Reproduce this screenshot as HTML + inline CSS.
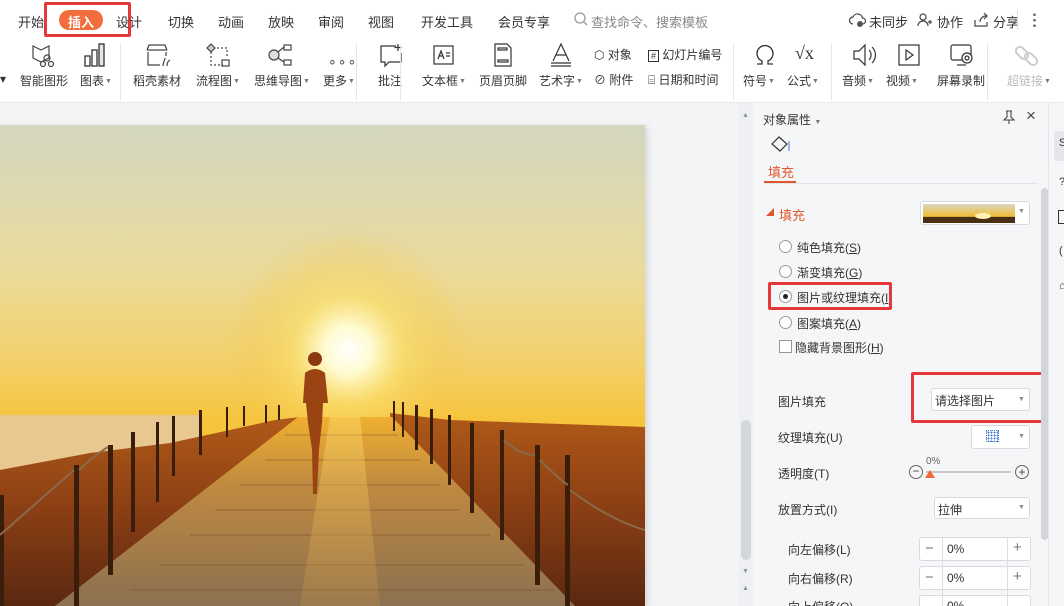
<!DOCTYPE html>
<html><head><meta charset="utf-8"><style>
*{margin:0;padding:0;box-sizing:border-box}
html,body{width:1064px;height:606px;overflow:hidden}
body{background:#f3f4f6;font-family:"Liberation Sans","Noto Sans CJK SC",sans-serif;color:#333;position:relative}
.a{position:absolute;white-space:nowrap}
.t{font-size:13px;top:12px;color:#333}
.l{font-size:12px;top:72px;color:#333}
.ar{font-size:7px;color:#777;vertical-align:2px;margin-left:1px}
.sep{position:absolute;top:44px;width:1px;height:56px;background:#e6e7ea}
.ic{position:absolute;top:42px}
.p{font-size:12px;color:#333}
.radio{position:absolute;width:13px;height:13px;border:1px solid #999;border-radius:50%;background:#fff}
.box{position:absolute;background:#fff;border:1px solid #d8dade;border-radius:3px}
</style></head><body>
<div class="a" style="left:0;top:0;width:1064px;height:103px;background:#fff;border-bottom:1px solid #e8e9ec"></div>
<div class="a t" style="left:18px">开始</div>
<div class="a" style="left:59px;top:10px;width:44px;height:20px;border-radius:10px;background:#f36c3c"></div>
<div class="a t" style="left:68px;color:#fff;font-weight:bold">插入</div>
<div class="a" style="left:44px;top:2px;width:87px;height:35px;border:3px solid #e5383b;border-radius:2px"></div>
<div class="a t" style="left:116px">设计</div>
<div class="a t" style="left:168px">切换</div>
<div class="a t" style="left:218px">动画</div>
<div class="a t" style="left:268px">放映</div>
<div class="a t" style="left:318px">审阅</div>
<div class="a t" style="left:368px">视图</div>
<div class="a t" style="left:421px">开发工具</div>
<div class="a t" style="left:498px">会员专享</div>
<svg class="a" style="left:574px;top:12px" width="14" height="14"><circle cx="6" cy="6" r="5" fill="none" stroke="#999" stroke-width="1.3"/><path d="M10 10l3 3" stroke="#999" stroke-width="1.3"/></svg>
<div class="a t" style="left:591px;color:#888">查找命令、搜索模板</div>
<svg class="a" style="left:849px;top:12px" width="18" height="16"><path d="M4 12a3.5 3.5 0 0 1 0-7a5 5 0 0 1 9.5 1a3 3 0 0 1 0 6" fill="none" stroke="#444" stroke-width="1.2"/><circle cx="11" cy="12" r="3" fill="#555"/></svg>
<div class="a t" style="left:869px">未同步</div>
<svg class="a" style="left:917px;top:12px" width="16" height="16"><circle cx="6" cy="5" r="3" fill="none" stroke="#444" stroke-width="1.2"/><path d="M1 14a5 5 0 0 1 10 0M11 10h4M13 8v4" fill="none" stroke="#444" stroke-width="1.2"/></svg>
<div class="a t" style="left:937px">协作</div>
<svg class="a" style="left:973px;top:12px" width="16" height="16"><path d="M2 8v6h12v-4M7 10a6 6 0 0 1 7-6M11 1l3 3-3 3" fill="none" stroke="#444" stroke-width="1.2"/></svg>
<div class="a t" style="left:993px">分享</div>
<div class="a" style="left:1017px;top:10px;width:1px;height:20px;background:#ddd"></div>
<div class="a" style="left:1033px;top:12px;width:3px;height:16px;background:radial-gradient(circle,#666 1.2px,transparent 1.5px) 0 0/3px 5.5px"></div>

<svg class="ic" style="left:30px" width="30" height="28" fill="none" stroke="#444" stroke-width="1.2"><path d="M3 4l8 4 8-4v12l-8 4-8-4z"/><circle cx="17" cy="16" r="3"/><circle cx="13" cy="22" r="2.5"/><circle cx="21" cy="22" r="2.5"/></svg>
<svg class="ic" style="left:83px" width="24" height="28" fill="none" stroke="#333" stroke-width="1.3"><rect x="2" y="14" width="5" height="10"/><rect x="9" y="8" width="5" height="16"/><rect x="16" y="2" width="5" height="22" fill="#e3e5e8"/></svg>
<svg class="ic" style="left:143px" width="30" height="28" fill="none" stroke="#444" stroke-width="1.2"><path d="M4 8h20M4 8l2-5h16l2 5M5 10v13h12M23 10v4"/><path d="M20 24c0-4 2-6 2-8M24 24c0-3 1-5 3-6" /></svg>
<svg class="ic" style="left:205px" width="26" height="28" fill="none" stroke="#444" stroke-width="1.2"><path d="M6 2l4 4-4 4-4-4z" fill="#ccc"/><path d="M6 10v13h12M12 6h10v10" stroke-dasharray="2 2"/><rect x="17" y="18" width="7" height="6"/></svg>
<svg class="ic" style="left:266px" width="30" height="28" fill="none" stroke="#444" stroke-width="1.2"><circle cx="8" cy="13" r="5" fill="#ddd"/><rect x="18" y="3" width="7" height="5"/><rect x="18" y="18" width="7" height="5"/><path d="M12 10l6-5M12 16l6 4"/></svg>
<div class="a" style="left:328px;top:53px;font-size:14px;color:#555;letter-spacing:1px">∘∘∘</div>
<svg class="ic" style="left:378px" width="26" height="28" fill="none" stroke="#333" stroke-width="1.2"><path d="M18 4H3v16h4v4l4-4h12v-9M20 2v7M16.5 5.5h7"/></svg>
<svg class="ic" style="left:432px" width="24" height="28" fill="none" stroke="#333" stroke-width="1.2"><rect x="2" y="4" width="19" height="18"/><path d="M6 17l3-8 3 8M7 14h4M14 11h4M14 14h4"/></svg>
<svg class="ic" style="left:492px" width="22" height="28" fill="none" stroke="#333" stroke-width="1.2"><path d="M3 2h12l4 4v18H3z"/><rect x="6" y="6" width="9" height="2"/><rect x="6" y="18" width="10" height="2"/></svg>
<svg class="ic" style="left:548px" width="26" height="28" fill="none" stroke="#333" stroke-width="1.2"><path d="M5 19l8-17 8 17M8 13h10M3 21h20M3 24h20"/></svg>
<div class="a p" style="left:594px;top:46px">⬡ 对象</div>
<div class="a p" style="left:594px;top:71px">⊘ 附件</div>
<div class="a p" style="left:648px;top:46px"><span style="border:1px solid #333;font-size:9px;padding:0 2px">#</span> 幻灯片编号</div>
<div class="a p" style="left:648px;top:71px">⌸ 日期和时间</div>
<svg class="ic" style="left:752px" width="26" height="28" fill="none" stroke="#333" stroke-width="1.3"><path d="M5 22h5v-3a8 8 0 1 1 6 0v3h5"/></svg>
<div class="a" style="left:795px;top:43px;font-size:18px;font-family:'Liberation Serif',serif;color:#333">√x</div>
<svg class="ic" style="left:851px" width="26" height="28" fill="none" stroke="#333" stroke-width="1.2"><path d="M3 9h5l6-6v20l-6-6H3zM18 8a7 7 0 0 1 0 10M21 5a11 11 0 0 1 0 16"/></svg>
<svg class="ic" style="left:897px" width="24" height="28" fill="none" stroke="#333" stroke-width="1.2"><rect x="2" y="3" width="20" height="20"/><path d="M9 8v10l7-5z"/></svg>
<svg class="ic" style="left:948px" width="28" height="28" fill="none" stroke="#333" stroke-width="1.2"><rect x="3" y="3" width="20" height="15" rx="2"/><path d="M9 23h9"/><circle cx="19" cy="16" r="5" fill="#fff"/><circle cx="19" cy="16" r="2"/></svg>
<svg class="ic" style="left:1015px" width="26" height="28" fill="none" stroke="#ccc" stroke-width="2"><rect x="3" y="4" width="8" height="14" rx="4" transform="rotate(-45 7 11)"/><rect x="12" y="10" width="8" height="14" rx="4" transform="rotate(-45 16 17)"/></svg>

<div class="a l" style="left:0">▾</div>
<div class="a l" style="left:20px">智能图形</div>
<div class="a l" style="left:80px">图表<span class="ar">▼</span></div>
<div class="a l" style="left:133px">稻壳素材</div>
<div class="a l" style="left:196px">流程图<span class="ar">▼</span></div>
<div class="a l" style="left:254px">思维导图<span class="ar">▼</span></div>
<div class="a l" style="left:323px">更多<span class="ar">▼</span></div>
<div class="a l" style="left:378px">批注</div>
<div class="a l" style="left:422px">文本框<span class="ar">▼</span></div>
<div class="a l" style="left:479px">页眉页脚</div>
<div class="a l" style="left:539px">艺术字<span class="ar">▼</span></div>
<div class="a l" style="left:743px">符号<span class="ar">▼</span></div>
<div class="a l" style="left:787px">公式<span class="ar">▼</span></div>
<div class="a l" style="left:842px">音频<span class="ar">▼</span></div>
<div class="a l" style="left:886px">视频<span class="ar">▼</span></div>
<div class="a l" style="left:937px">屏幕录制</div>
<div class="a l" style="left:1007px;color:#bbb">超链接<span class="ar">▼</span></div>
<div class="sep" style="left:120px"></div><div class="sep" style="left:356px"></div><div class="sep" style="left:400px"></div><div class="sep" style="left:733px"></div><div class="sep" style="left:831px"></div><div class="sep" style="left:987px"></div>

<svg class="a" style="left:0;top:125px;box-shadow:2px 2px 6px rgba(0,0,0,.15)" width="645" height="481">
<defs>
<linearGradient id="sky" x1="0" y1="0" x2="0" y2="1"><stop offset="0" stop-color="#d3d6c0"/><stop offset=".3" stop-color="#eadb9c"/><stop offset=".5" stop-color="#f3d068"/><stop offset=".62" stop-color="#f6c43a"/><stop offset="1" stop-color="#f2b020"/></linearGradient>
<radialGradient id="sun" cx="348" cy="225" r="120" gradientUnits="userSpaceOnUse"><stop offset="0" stop-color="#ffffff"/><stop offset=".2" stop-color="#fffbd0"/><stop offset=".45" stop-color="#fae070" stop-opacity=".7"/><stop offset="1" stop-color="#f5c040" stop-opacity="0"/></radialGradient>
<linearGradient id="gr" x1="0" y1="0" x2="0" y2="1"><stop offset="0" stop-color="#b05a18"/><stop offset=".5" stop-color="#8a3e14"/><stop offset="1" stop-color="#5a2810"/></linearGradient>
<linearGradient id="bw" x1="0" y1="0" x2="0" y2="1"><stop offset="0" stop-color="#f0b030"/><stop offset=".35" stop-color="#c08a40"/><stop offset="1" stop-color="#8c7050"/></linearGradient>
<linearGradient id="ref" x1="0" y1="0" x2="0" y2="1"><stop offset="0" stop-color="#ffe070" stop-opacity=".9"/><stop offset="1" stop-color="#f0b040" stop-opacity=".3"/></linearGradient>
</defs>
<rect width="645" height="481" fill="url(#sky)"/>
<rect width="645" height="481" fill="url(#sun)"/>
<rect y="290" width="200" height="60" fill="#e8c890"/>
<path d="M0 345L90 328L170 318L230 305L275 295L300 292L300 481H0z" fill="url(#gr)"/>
<path d="M390 288L450 295L645 302V481H390z" fill="url(#gr)"/>
<path d="M298 292L392 292L575 481L55 481z" fill="url(#bw)"/>
<g stroke="#6a4a28" stroke-width="1" opacity=".45">
<path d="M285 310H398M265 335H420M240 360H440M215 385H460M190 410H490M160 440H525M130 465H555"/></g>
<path d="M330 292L360 292L380 481L300 481z" fill="url(#ref)" opacity=".5"/>
<g fill="#3a1e0c">
<rect x="0" y="370" width="4" height="111"/><rect x="74" y="340" width="5" height="141"/><rect x="108" y="320" width="5" height="130"/><rect x="131" y="307" width="4" height="100"/><rect x="156" y="297" width="3" height="80"/><rect x="172" y="291" width="3" height="60"/><rect x="199" y="285" width="3" height="45"/><rect x="226" y="282" width="2" height="30"/><rect x="243" y="281" width="2" height="20"/><rect x="265" y="280" width="2" height="18"/><rect x="278" y="280" width="2" height="15"/>
<rect x="393" y="276" width="2" height="30"/><rect x="402" y="277" width="2" height="35"/><rect x="415" y="280" width="3" height="45"/><rect x="430" y="284" width="3" height="55"/><rect x="448" y="290" width="3" height="70"/><rect x="470" y="298" width="4" height="90"/><rect x="500" y="305" width="4" height="110"/><rect x="535" y="320" width="5" height="140"/><rect x="565" y="330" width="5" height="151"/>
</g>
<path d="M0 410Q40 375 74 345M79 345Q95 330 108 322M504 315Q520 330 535 330M540 335Q560 355 568 360M570 365Q610 395 645 405" stroke="#8a6a4a" stroke-width="2" fill="none"/>
<circle cx="315" cy="234" r="7" fill="#8a3a10"/>
<path d="M305 248q10-8 20 0l3 30h-5l-1 20l-3 26l-2 45h-4l-1-45l-4-26l-2-20h-3z" fill="#9a4414"/>
</svg>

<div class="a" style="left:739px;top:103px;width:14px;height:503px;background:#eef0f3"></div>
<div class="a" style="left:741px;top:420px;width:10px;height:140px;border-radius:5px;background:#d3d6dc"></div>
<div class="a" style="left:742px;top:112px;font-size:7px;color:#8a94a6">▲</div>
<div class="a" style="left:742px;top:568px;font-size:7px;color:#8a94a6">▼</div>
<div class="a" style="left:742px;top:585px;font-size:7px;color:#8a94a6">▲</div>

<div class="a" style="left:753px;top:103px;width:295px;height:503px;background:#f5f6f8"></div>
<div class="a p" style="left:763px;top:111px">对象属性 <span style="font-size:7px;color:#777">▼</span></div>
<svg class="a" style="left:1002px;top:110px" width="14" height="14" fill="none" stroke="#444" stroke-width="1.1"><path d="M4 1h6M5 1v6l-3 3h10l-3-3V1M7 10v4"/></svg>
<div class="a" style="left:1026px;top:106px;font-size:17px;color:#444">×</div>
<svg class="a" style="left:769px;top:135px" width="24" height="20" fill="none" stroke="#333" stroke-width="1.2"><path d="M10 2l8 7-7 7-8-7z"/><path d="M20 6v10" stroke="#5a8ee0"/></svg>
<div class="a" style="left:768px;top:162px;font-size:13px;color:#e0582a">填充</div>
<div class="a" style="left:764px;top:181px;width:32px;height:2px;background:#e0582a"></div>
<div class="a" style="left:764px;top:183px;width:274px;height:1px;background:#e2e4e8"></div>
<div class="a" style="left:766px;top:207px;font-size:8px;color:#e0582a">◢</div>
<div class="a" style="left:779px;top:205px;font-size:13px;color:#e0582a">填充</div>
<div class="box" style="left:920px;top:201px;width:110px;height:24px"></div>
<svg class="a" style="left:923px;top:204px" width="92" height="19"><defs><linearGradient id="ts" x1="0" y1="0" x2="0" y2="1"><stop offset="0" stop-color="#d8d8c0"/><stop offset=".6" stop-color="#f0c040"/><stop offset="1" stop-color="#4a2a10"/></linearGradient></defs><rect width="92" height="19" fill="url(#ts)"/><rect y="13" width="92" height="6" fill="#4a2e14"/><ellipse cx="60" cy="12" rx="8" ry="3" fill="#fff3b0"/></svg>
<div class="a" style="left:1018px;top:208px;font-size:7px;color:#888">▼</div>

<div class="radio" style="left:779px;top:240px"></div><div class="a p" style="left:797px;top:239px">纯色填充(<u>S</u>)</div>
<div class="radio" style="left:779px;top:265px"></div><div class="a p" style="left:797px;top:264px">渐变填充(<u>G</u>)</div>
<div class="radio" style="left:779px;top:290px"><div style="position:absolute;left:3px;top:3px;width:5px;height:5px;border-radius:50%;background:#222"></div></div><div class="a p" style="left:797px;top:289px">图片或纹理填充(<u>I</u>)</div>
<div class="a" style="left:768px;top:282px;width:124px;height:28px;border:3px solid #e5383b;border-radius:2px"></div>
<div class="radio" style="left:779px;top:316px"></div><div class="a p" style="left:797px;top:315px">图案填充(<u>A</u>)</div>
<div class="a" style="left:779px;top:340px;width:13px;height:13px;border:1px solid #999;background:#fff"></div><div class="a p" style="left:795px;top:339px">隐藏背景图形(<u>H</u>)</div>

<div class="a p" style="left:778px;top:393px">图片填充</div>
<div class="box" style="left:931px;top:388px;width:99px;height:23px"></div>
<div class="a p" style="left:935px;top:392px">请选择图片</div>
<div class="a" style="left:1018px;top:396px;font-size:7px;color:#888">▼</div>
<div class="a" style="left:911px;top:372px;width:135px;height:51px;border:3px solid #e5383b;border-radius:2px"></div>

<div class="a p" style="left:778px;top:429px">纹理填充(U)</div>
<div class="box" style="left:971px;top:425px;width:59px;height:24px"></div>
<div class="a" style="left:986px;top:430px;width:13px;height:12px;border:1px dotted #4a7ad8;background:radial-gradient(#4a7ad8 0.8px,transparent 1px) 0 0/3px 3px"></div>
<div class="a" style="left:1018px;top:433px;font-size:7px;color:#888">▼</div>

<div class="a p" style="left:778px;top:465px">透明度(T)</div>
<div class="a" style="left:909px;top:465px;width:14px;height:14px;border:1px solid #666;border-radius:50%;font-size:12px;line-height:11px;text-align:center;color:#444">−</div>
<div class="a" style="left:926px;top:456px;font-size:10px;color:#666">0%</div>
<div class="a" style="left:926px;top:471px;width:85px;height:2px;background:#c8c8c8"></div>
<div class="a" style="left:925px;top:470px;width:0;height:0;border-left:5px solid transparent;border-right:5px solid transparent;border-bottom:8px solid #f06a3a"></div>
<div class="a" style="left:1015px;top:465px;width:14px;height:14px;border:1px solid #666;border-radius:50%;font-size:12px;line-height:12px;text-align:center;color:#444">+</div>

<div class="a p" style="left:778px;top:501px">放置方式(I)</div>
<div class="box" style="left:934px;top:497px;width:96px;height:22px"></div>
<div class="a p" style="left:938px;top:501px">拉伸</div>
<div class="a" style="left:1018px;top:504px;font-size:7px;color:#888">▼</div>

<div class="a p" style="left:788px;top:541px">向左偏移(L)</div>
<div class="a p" style="left:788px;top:570px">向右偏移(R)</div>
<div class="a p" style="left:788px;top:598px">向上偏移(O)</div>
<div class="box" style="left:919px;top:537px;width:112px;height:24px"></div>
<div class="box" style="left:919px;top:566px;width:112px;height:24px"></div>
<div class="box" style="left:919px;top:595px;width:112px;height:24px"></div>
<div class="a" style="left:942px;top:537px;width:1px;height:69px;background:#dcdde0"></div>
<div class="a" style="left:1007px;top:537px;width:1px;height:69px;background:#dcdde0"></div>
<div class="a" style="left:925px;top:540px;font-size:15px;color:#777">−</div><div class="a p" style="left:947px;top:542px">0%</div><div class="a" style="left:1013px;top:539px;font-size:15px;color:#777">+</div>
<div class="a" style="left:925px;top:569px;font-size:15px;color:#777">−</div><div class="a p" style="left:947px;top:571px">0%</div><div class="a" style="left:1013px;top:568px;font-size:15px;color:#777">+</div>
<div class="a p" style="left:947px;top:599px">0%</div>

<div class="a" style="left:1041px;top:188px;width:7px;height:352px;border-radius:4px;background:#d3d5da"></div>
<div class="a" style="left:1048px;top:103px;width:16px;height:503px;background:#f5f6f8;border-left:1px solid #e2e4e8"></div>
<div class="a" style="left:1054px;top:131px;width:10px;height:30px;border-radius:3px 0 0 3px;background:#e4e6ea"></div>
<div class="a" style="left:1059px;top:137px;font-size:11px;color:#333">S</div>
<div class="a" style="left:1059px;top:176px;font-size:11px;color:#333">?</div>
<div class="a" style="left:1058px;top:210px;width:8px;height:14px;border:1px solid #333"></div>
<div class="a" style="left:1059px;top:245px;font-size:11px;color:#333">(</div>
<div class="a" style="left:1059px;top:280px;font-size:11px;color:#333">⌂</div>
</body></html>
